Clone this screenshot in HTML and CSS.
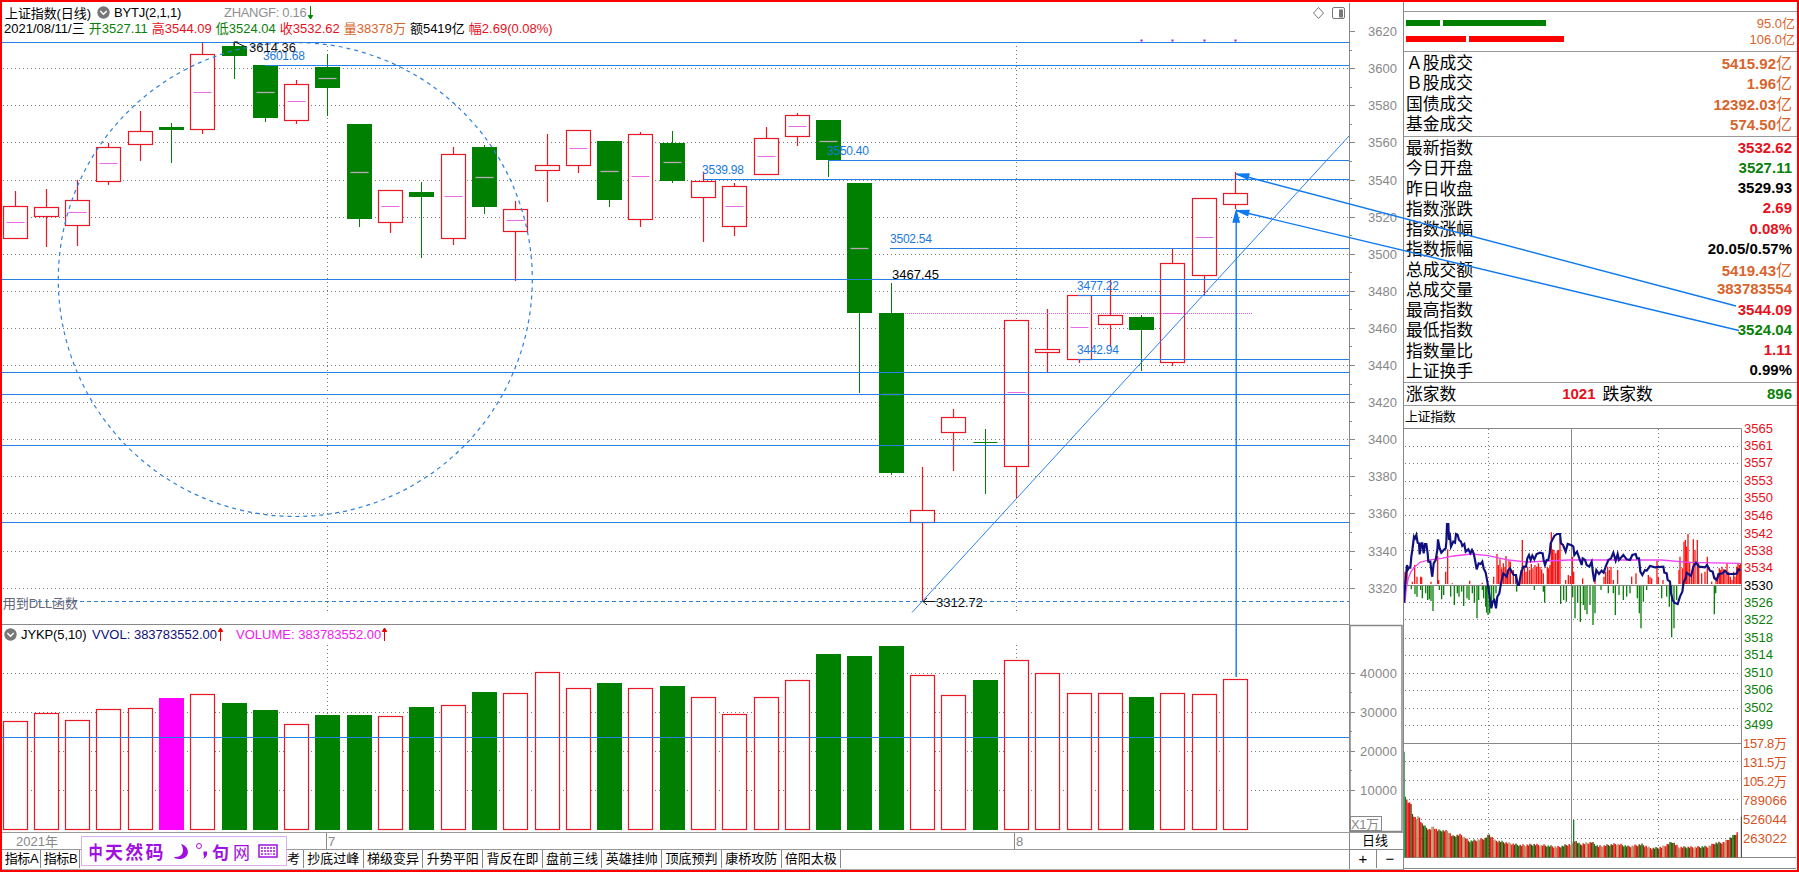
FILE: index.html
```html
<!DOCTYPE html>
<html lang="zh-CN">
<head>
  <meta charset="UTF-8">
  <title>上证指数(日线)</title>
  <link rel="stylesheet" href="styles.css">
</head>
<body>
  <div class="screen">
    <div class="left">
      <div class="charts">
        <div class="plots">
          <div class="head">
            <div class="head-row title-row">
              <span class="name">上证指数(日线)</span>
              <svg class="drop" viewBox="0 0 13 13"><circle cx="6.5" cy="6.5" r="6.2"/><path d="M3.3 5l3.2 3.2L9.7 5"/></svg>
              <span class="formula">BYTJ(2,1,1)</span>
              <span class="zhangf">ZHANGF: 0.16</span>
              <svg class="down" viewBox="0 0 7 15"><path d="M3.5 1v13M1.3 10.500l2.200 3.500 2.200-3.500z"/></svg>
              <svg class="tools" viewBox="0 0 34 16"><path d="M6.5 2.5l5 5.500-5 5.500-5-5.500z"/><rect x="20.5" y="2.5" width="12" height="11" rx="1.5"/><rect class="solid" x="27.5" y="5" width="3" height="7"/></svg>
            </div>
            <div class="head-row quote-row">
              <span>2021/08/11/三</span>
              <span class="green">开3527.11</span>
              <span class="red">高3544.09</span>
              <span class="green">低3524.04</span>
              <span class="red">收3532.62</span>
              <span class="orange">量38378万</span>
              <span>额5419亿</span>
              <span class="red">幅2.69(0.08%)</span>
            </div>
          </div>
          <svg id="price" class="price" viewBox="2 36 1347 589"></svg>
          <div class="sub-head">
            <svg class="drop" viewBox="0 0 13 13"><circle cx="6.5" cy="6.5" r="6.2"/><path d="M3.3 5l3.2 3.2L9.7 5"/></svg>
            <span class="jykp">JYKP(5,10)</span>
            <span class="vvol">VVOL: 383783552.00</span>
            <svg class="up" viewBox="0 0 7 15"><path d="M3.5 14v-13M1.3 4.5l2.200-3.500 2.200 3.500z"/></svg>
            <span class="volume">VOLUME: 383783552.00</span>
            <svg class="up" viewBox="0 0 7 15"><path d="M3.5 14v-13M1.3 4.5l2.200-3.500 2.200 3.500z"/></svg>
          </div>
          <svg id="vol" class="vol" viewBox="2 644 1347 188"></svg>
        </div>
        <svg id="axis" class="axis" viewBox="1349 2 54 830"></svg>
      </div>
      <div class="foot">
        <div class="foot-main">
          <div class="dates">
            <span class="year">2021年</span>
            <span class="month m7">7</span>
            <span class="month m8">8</span>
          </div>
          <div class="tabs">
            <span class="tab short">指标A</span>
            <span class="tab short">指标B</span>
            <span class="tab hidden">参考</span>
            <span class="tab">抄底过峰</span>
            <span class="tab">梯级变异</span>
            <span class="tab">升势平阳</span>
            <span class="tab">背反在即</span>
            <span class="tab">盘前三线</span>
            <span class="tab">英雄挂帅</span>
            <span class="tab">顶底预判</span>
            <span class="tab">康桥攻防</span>
            <span class="tab">倍阳太极</span>
          </div>
        </div>
        <div class="foot-side">
          <div class="period">日线</div>
          <div class="zoom"><span>+</span><span>−</span></div>
        </div>
      </div>
      <div class="ime">
        <span class="zh">中</span>
        <span class="brand">天然码</span>
        <svg class="moon" viewBox="0 0 16 17"><path d="M8 1c10 3 9 15-2 15-3 0-4.500-1-5-2 9 1 11-7 7-13z"/></svg>
        <svg class="punct" viewBox="0 0 13 18"><circle cx="4" cy="4" r="2.5"/><path d="M8.5 9.5h3.500c.5 4-1 6-4 7.500 1.500-2 1.500-3 .5-4z"/></svg>
        <span class="ju">句</span>
        <span class="wang">网</span>
        <svg class="keys" viewBox="0 0 20 14"><rect x="1" y="1" width="18" height="12"/><path d="M3 4h14M3 7h14M3 10h2M6.500 10h7M15 10h2"/></svg>
      </div>
    </div>

    <div class="panel">
      <div class="panel-top"></div>
      <div class="flow">
        <div class="flow-row"><i class="bar g b1"></i><i class="bar g b2"></i><span>95.0亿</span></div>
        <div class="flow-row"><i class="bar r b3"></i><i class="bar r b4"></i><span>106.0亿</span></div>
      </div>
      <div class="group deals">
        <div class="row"><span>Ａ股成交</span><b class="orange">5415.92<em>亿</em></b></div>
        <div class="row"><span>Ｂ股成交</span><b class="orange">1.96<em>亿</em></b></div>
        <div class="row"><span>国债成交</span><b class="orange">12392.03<em>亿</em></b></div>
        <div class="row"><span>基金成交</span><b class="orange">574.50<em>亿</em></b></div>
      </div>
      <div class="group index">
        <div class="row"><span>最新指数</span><b class="red">3532.62</b></div>
        <div class="row"><span>今日开盘</span><b class="green">3527.11</b></div>
        <div class="row"><span>昨日收盘</span><b>3529.93</b></div>
        <div class="row"><span>指数涨跌</span><b class="red">2.69</b></div>
        <div class="row"><span>指数涨幅</span><b class="red">0.08%</b></div>
        <div class="row"><span>指数振幅</span><b>20.05/0.57%</b></div>
        <div class="row"><span>总成交额</span><b class="orange">5419.43<em>亿</em></b></div>
        <div class="row"><span>总成交量</span><b class="orange">383783554</b></div>
        <div class="row"><span>最高指数</span><b class="red">3544.09</b></div>
        <div class="row"><span>最低指数</span><b class="green">3524.04</b></div>
        <div class="row"><span>指数量比</span><b class="red">1.11</b></div>
        <div class="row"><span>上证换手</span><b>0.99%</b></div>
      </div>
      <div class="breadth">
        <span>涨家数</span><b class="red">1021</b><span class="fall">跌家数</span><b class="green">896</b>
      </div>
      <div class="mini-title">上证指数</div>
      <svg id="mini" class="mini" viewBox="1404 418 393 452"></svg>
    </div>

    <svg class="marks" viewBox="0 0 1799 872">
      <path d="M1236.2 677V212M1736 306L1236 174M1739 330.5L1236 210.5"/>
      <path class="tip" d="M1236.2 211l-3 11h6zM1237 174.200l12-.2-1.300 5zM1237 210.700l12-.2-1.300 5z"/>
    </svg>
  </div>
  <script src="script.js"></script>
</body>
</html>
```
FILE: styles.css
```css
body {
  margin: 0;
  background: #fff;
  color: #000;
  font-family: "Liberation Sans", "Noto Sans CJK SC", sans-serif;
  font-size: 13px;
}
.screen {
  position: relative;
  display: flex;
  box-sizing: border-box;
  width: 1799px;
  height: 872px;
  border: 2px solid #f00;
  overflow: hidden;
}
.red {
  color: #e8101c;
}
.green {
  color: #0a800a;
}
.orange {
  color: #d8642c;
}
svg {
  display: block;
  flex: none;
}
svg text {
  font-family: "Liberation Sans", "Noto Sans CJK SC", sans-serif;
  font-size: 13px;
}

/* left side */
.left {
  position: relative;
  width: 1401px;
  flex: none;
}
.charts {
  display: flex;
  height: 830px;
}
.plots {
  width: 1347px;
}
.head {
  height: 34px;
}
.head-row {
  display: flex;
  align-items: center;
  white-space: nowrap;
}
.title-row {
  height: 21px;
  padding: 0 3px;
}
.name {
  width: 92px;
  letter-spacing: -0.1px;
}
.drop {
  width: 13px;
  height: 13px;
}
.drop circle {
  fill: #777;
}
.drop path {
  fill: none;
  stroke: #fff;
  stroke-width: 1.5;
}
.formula {
  width: 110px;
  margin-left: 4px;
  letter-spacing: -0.2px;
}
.zhangf {
  color: #909090;
  letter-spacing: -0.3px;
}
.down, .up {
  width: 7px;
  height: 15px;
}
.down {
  margin-left: 1px;
}
.down path {
  stroke: #080;
  fill: #080;
}
.up path {
  stroke: #e00;
  fill: #e00;
}
.tools {
  width: 34px;
  height: 16px;
  margin-left: auto;
}
.tools path, .tools rect {
  fill: none;
  stroke: #777;
}
.tools .solid {
  fill: #777;
}
.quote-row {
  height: 8px;
  padding-left: 2px;
  gap: 4px;
}
.price {
  width: 1347px;
  height: 589px;
}
.sub-head {
  display: flex;
  align-items: center;
  height: 19px;
  padding-left: 2px;
  line-height: 17px;
}
.jykp {
  width: 71px;
  margin-left: 4px;
  letter-spacing: -0.1px;
}
.vvol {
  color: #101078;
}
.volume {
  margin-left: 12px;
  color: #f018f0;
}
.vol {
  width: 1347px;
  height: 188px;
}
.axis {
  width: 54px;
  height: 830px;
}

/* chart strokes */
.grid {
  fill: none;
  stroke: #777;
  stroke-dasharray: 1 3;
}
.frame {
  fill: none;
  stroke: #888;
}
.level {
  stroke: #2480e4;
  stroke-width: 1.1;
}
.circle {
  fill: none;
  stroke: #2f80dc;
  stroke-width: 1.2;
  stroke-dasharray: 4 4;
}
.floor {
  stroke: #2f80c8;
  stroke-width: 1.2;
  stroke-dasharray: 4 3;
}
.up-bar {
  fill: #fff;
  stroke: #e81824;
  stroke-width: 1.2;
}
.down-bar {
  fill: #008000;
  stroke: #008000;
}
.hot-bar {
  fill: #f0f;
  stroke: #f0f;
}
.mid {
  stroke: #e868e8;
}
.mid-dark {
  stroke: #b8a8b8;
  stroke-width: 1.3;
}
.trend {
  stroke: #2f80ee;
}
.pink-dots {
  stroke: #f050e8;
  stroke-dasharray: 1 1;
}
.tag {
  fill: #1a78e0;
}
svg .tag {
  font-size: 12px;
}

/* bottom bars */
.foot {
  display: flex;
  height: 38px;
  box-sizing: border-box;
  border-top: 1px solid #999;
  border-bottom: 1px solid #aaa;
}
.foot-main {
  width: 1347px;
}
.dates {
  display: flex;
  height: 16px;
  line-height: 17px;
  color: #888;
  border-bottom: 1px solid #999;
}
.year {
  width: 310px;
  padding-left: 14px;
}
.month {
  border-left: 1px solid #888;
  padding-left: 1px;
}
.m7 {
  width: 686px;
}
.tabs {
  display: flex;
  height: 18px;
  line-height: 18px;
}
.tab {
  box-sizing: border-box;
  width: 59.7px;
  border-right: 1px solid #888;
  text-align: center;
  white-space: nowrap;
}
.short {
  width: 39px;
  padding-left: 1px;
  letter-spacing: -0.4px;
}
.hidden {
  width: 224px;
  text-align: right;
  padding-right: 3px;
}
.foot-side {
  flex: 1;
  border-left: 1px solid #888;
  text-align: center;
}
.period {
  height: 16px;
  line-height: 16px;
  padding-right: 3px;
  border-bottom: 1px solid #888;
}
.zoom {
  display: flex;
  height: 18px;
  line-height: 17px;
  font-size: 15px;
}
.zoom span {
  flex: 1;
}
.zoom span + span {
  border-left: 1px solid #888;
}
/* input method bar floats over the tabs */
.ime {
  position: absolute;
  left: 79px;
  top: 834px;
  box-sizing: border-box;
  width: 206px;
  height: 30px;
  padding-left: 4px;
  display: flex;
  align-items: center;
  background: #fff;
  border: 1px solid #d8b0f0;
  color: #a010e0;
}
.zh {
  width: 19px;
  font-size: 19px;
  font-weight: bold;
  transform: scaleX(.75);
}
.brand {
  font-size: 18px;
  font-weight: bold;
  letter-spacing: 2.3px;
  white-space: nowrap;
}
.moon {
  width: 16px;
  height: 17px;
  margin-left: 7px;
  fill: #a010e0;
}
.punct {
  width: 13px;
  height: 18px;
  margin: 0 4px 0 6px;
  fill: #a010e0;
}
.punct circle {
  fill: none;
  stroke: #a010e0;
}
.ju {
  font-size: 17px;
  font-weight: bold;
}
.wang {
  font-size: 17px;
  margin: 0 8px 0 4px;
}
.keys {
  width: 20px;
  height: 14px;
}
.keys rect, .keys path {
  fill: none;
  stroke: #a010e0;
  stroke-width: 1.5;
}
.keys path {
  stroke-dasharray: 2 1;
}

/* right side */
.panel {
  flex: 1;
  border-left: 1px solid #888;
}
.panel-top {
  height: 9px;
  border-bottom: 1px solid #999;
}
.flow {
  height: 39px;
  border-bottom: 1px solid #999;
}
.flow-row {
  display: flex;
  align-items: center;
  height: 16px;
  padding: 3px 2px 0 2px;
  margin-bottom: -3px;
}
.flow-row span {
  margin-left: auto;
  margin-top: -2px;
  color: #d8642c;
}
.bar {
  height: 6px;
  margin-right: 3px;
}
.g {
  background: #008000;
}
.r {
  background: #f00;
}
.b1 { width: 34px; }
.b2 { width: 103px; }
.b3 { width: 60px; }
.b4 { width: 95px; }
.group {
  box-sizing: border-box;
  border-bottom: 1px solid #999;
  padding: 0 5px 0 2px;
}
.deals {
  height: 85px;
}
.index {
  height: 246px;
}
.row {
  display: flex;
  justify-content: space-between;
  align-items: center;
  height: 20.25px;
  font-size: 16.8px;
}
.row b, .breadth b {
  font-size: 15px;
}
.row em {
  font-size: 16px;
  font-style: normal;
  font-weight: normal;
}
.breadth {
  display: flex;
  align-items: center;
  box-sizing: border-box;
  height: 23px;
  padding: 0 5px 2px 2px;
  border-bottom: 1px solid #999;
  font-size: 16.8px;
}
.breadth b {
  flex: 1;
  text-align: right;
}
.breadth .fall {
  margin-left: 7px;
}
.mini-title {
  height: 12px;
  line-height: 21px;
  padding-left: 1px;
  letter-spacing: -0.4px;
}
.mini {
  width: 393px;
  height: 452px;
}
.mini .ink {
  fill: none;
  stroke: #101080;
  stroke-width: 6.5;
}
.mini .avg {
  fill: none;
  stroke: #f040f0;
  stroke-width: 3.8;
}
/* arrows drawn over chart and panel */
.marks {
  position: absolute;
  left: -2px;
  top: -2px;
  width: 1799px;
  height: 872px;
  pointer-events: none;
}
.marks path {
  fill: none;
  stroke: #0f7af0;
  stroke-width: 1.4;
}
.marks .tip {
  fill: #0f7af0;
}
```
FILE: script.js
```javascript
const RED = '#e8101c', GREEN = '#0a800a', ORANGE = '#d8501c', GRAY = '#888';
const line = (x1, y1, x2, y2, cls) => `<line x1="${x1}" y1="${y1}" x2="${x2}" y2="${y2}" class="${cls}"/>`;
const text = (x, y, s, fill, w) => `<text x="${x}" y="${y}" fill="${fill}"${w ? ` textLength="${w}"` : ''}>${s}</text>`;
const px = n => Math.floor(n) + 0.5;
const centre = i => Math.floor(15 + 31.295 * i) + 0.5;

// kind, body top, body bottom, high, low, middle mark, volume top
const days = [
  ['r', 206, 238, 191, 239, 222, 721], ['r', 207, 216, 189, 247, 0, 713], ['r', 200, 225, 180, 246, 212, 720],
  ['r', 147, 181, 143, 185, 163, 709], ['r', 131, 144, 111, 161, 0, 708], ['g', 127, 129, 123, 163, 0, 698],
  ['r', 54, 129, 42, 134, 92, 694], ['g', 46, 55, 42, 79, 0, 703], ['g', 65, 117, 65, 122, 92, 710],
  ['r', 84, 120, 80, 124, 101, 724], ['g', 67, 87, 54, 116, 78, 715], ['g', 124, 218, 124, 227, 172, 715],
  ['r', 190, 222, 190, 233, 206, 716], ['g', 192, 196, 182, 258, 0, 707], ['r', 154, 238, 147, 245, 196, 705],
  ['g', 147, 206, 145, 214, 177, 692], ['r', 209, 231, 201, 281, 220, 693], ['r', 165, 170, 134, 202, 0, 672],
  ['r', 130, 165, 130, 173, 148, 688], ['g', 141, 199, 141, 207, 171, 683], ['r', 134, 219, 132, 227, 176, 688],
  ['g', 143, 180, 131, 183, 162, 686], ['r', 181, 197, 172, 242, 0, 697], ['r', 186, 226, 183, 236, 206, 714],
  ['r', 138, 174, 127, 174, 156, 697], ['r', 115, 136, 113, 146, 126, 680], ['g', 120, 159, 120, 177, 141, 654],
  ['g', 183, 312, 183, 393, 248, 656], ['g', 313, 472, 283, 475, 394, 646], ['r', 510, 522, 467, 601, 0, 675],
  ['r', 417, 432, 409, 471, 0, 695], ['g', 442, 442, 429, 494, 0, 680], ['r', 320, 466, 320, 498, 392, 660],
  ['r', 349, 352, 309, 372, 0, 673], ['r', 295, 359, 295, 363, 327, 693], ['r', 315, 324, 280, 347, 0, 693],
  ['g', 317, 329, 315, 371, 0, 697], ['r', 263, 362, 249, 366, 313, 693], ['r', 198, 275, 198, 295, 237, 694],
  ['r', 193, 204, 172, 209, 0, 679]
];
const cls = { r: 'up-bar', g: 'down-bar', m: 'hot-bar' };
const priceY = v => 68.7 + (3600 - v) * 1.855;

// daily candles
let s = '';
for (let v = 3600; v >= 3320; v -= 20) s += line(3, px(priceY(v)), 1349, px(priceY(v)), 'grid');
s += line(327.5, 46, 327.5, 612, 'grid') + line(1016.5, 46, 1016.5, 612, 'grid');
days.forEach(([k, top, bot, hi, lo, mid], i) => {
  const x = centre(i);
  s += line(x, hi, x, top, cls[k]) + line(x, bot, x, lo, cls[k]);
  // open equals close: a plain dash instead of a body
  if (top === bot) s += line(x - 12, top + .5, x + 12, top + .5, cls[k]);
  else s += `<rect x="${x - 12}" y="${top + .5}" width="24" height="${bot - top}" class="${cls[k]}"/>`;
  if (mid) s += line(x - 9, mid + .5, x + 9, mid + .5, k === 'g' ? 'mid-dark' : 'mid');
});
[[2, 42], [265, 65], [828, 160], [704, 179], [890, 248], [2, 279], [1078, 295], [1078, 359],
 [2, 372], [2, 394], [2, 445], [2, 522]].forEach(([x, y]) => s += line(x, y + .5, 1349, y + .5, 'level'));
s += line(3, 601.5, 1349, 601.5, 'floor');
s += '<ellipse cx="295.3" cy="279.5" rx="237" ry="237" class="circle"/>';
s += line(905, 313.5, 1252, 313.5, 'pink-dots') + line(912, 612.5, 1349, 136, 'trend');
[1141, 1172, 1204, 1235].forEach(x => s += `<rect x="${x - .5}" y="39.5" width="2" height="2" fill="#a020d0"/>`);
[[263, 60, '3601.68'], [827, 155, '3550.40'], [702, 174, '3539.98'], [890, 243, '3502.54'],
 [1077, 290, '3477.22'], [1077, 354, '3442.94']].forEach(([x, y, t]) =>
  s += `<text x="${x}" y="${y}" class="tag" textLength="42">${t}</text>`);
s += text(249, 52, '3614.36', '#111', 47) + text(892, 279, '3467.45', '#000', 47) + text(936, 607, '3312.72', '#111', 47);
s += text(3, 608, '用到DLL函数', '#667', 75);
s += '<path d="M234 46v-4h4M235 42l11 5M923 601.5h12M927 598l-4 3.5 4 3.5" fill="none" stroke="#111"/>';
s += line(2, 624.5, 1349, 624.5, 'frame');
document.getElementById('price').innerHTML = s;

// volume
s = '';
[673, 712, 751, 790].forEach(y => s += line(3, y + .5, 1349, y + .5, 'grid'));
s += line(327.5, 645, 327.5, 828, 'grid') + line(1016.5, 645, 1016.5, 828, 'grid');
days.forEach((d, i) => {
  const c = i === 5 ? cls.m : cls[d[0]];
  s += `<rect x="${centre(i) - 12}" y="${d[6] + .5}" width="24" height="${829 - d[6]}" class="${c}"/>`;
});
s += line(2, 737.5, 1349, 737.5, 'level');
document.getElementById('vol').innerHTML = s;

// value axis
s = line(1349.5, 3, 1349.5, 832, 'frame');
for (let v = 3620; v >= 3320; v -= 20) {
  const y = priceY(v);
  s += line(1349, px(y), 1355, px(y), 'frame') + text(1368, px(y) + 4.5, v, GRAY, 29);
  if (v > 3320) s += line(1349, px(y + 18.5), 1352, px(y + 18.5), 'frame');
}
s += '<rect x="1350" y="625.5" width="52" height="206" class="frame" stroke-width="1.5"/>';
[[673, 40000], [712, 30000], [751, 20000], [790, 10000]].forEach(([y, v]) => {
  s += line(1349, px(y), 1355, px(y), 'frame') + text(1360, y + 5, v, GRAY, 37);
  if (v > 10000) s += line(1349, px(y + 19), 1352, px(y + 19), 'frame');
});
s += '<rect x="1350.5" y="816.5" width="31" height="14" class="frame"/>' + text(1351, 829, 'X1万', GRAY, 28);
document.getElementById('axis').innerHTML = s;

// intraday chart, a third of a pixel per unit
const ink = '27,608 30,560 36,495 39,508 42,503 46,503 49,470 52,450 57,410 60,415 64,405 68,428 72,430 74,463 79,430 82,430 86,460 90,432 94,432 98,460 100,485 106,485 110,520 112,530 116,490 122,480 127,450 129,418 134,445 139,458 146,450 152,445 154,425 156,372 160,372 162,420 164,398 168,440 175,425 180,428 183,402 188,405 192,420 198,425 202,438 208,432 212,455 220,448 226,460 231,450 236,460 240,480 245,508 251,490 257,492 262,485 266,505 272,518 277,545 284,590 289,625 293,605 298,600 303,625 307,590 313,580 318,550 325,520 335,530 340,510 345,505 350,515 356,525 363,525 368,555 372,555 378,520 385,500 393,500 397,475 402,465 407,480 412,467 418,478 425,462 435,458 443,460 446,480 450,495 455,480 460,480 464,460 467,430 478,408 486,402 495,402 498,430 504,435 512,455 518,432 530,436 535,440 538,465 546,455 553,475 560,495 563,475 570,480 575,495 583,500 590,485 594,520 598,545 604,510 612,522 620,512 626,518 632,500 640,480 648,475 655,458 662,482 668,462 672,480 685,465 695,478 705,480 712,465 722,462 726,475 732,475 736,515 742,525 750,510 755,512 765,498 780,502 805,500 808,518 815,520 818,540 825,545 828,580 833,600 838,608 848,612 855,590 862,575 866,545 872,535 875,518 888,528 895,500 903,488 912,500 930,502 936,495 945,512 953,515 958,535 965,540 972,522 983,520 990,512 998,522 1020,522 1026,520 1030,508 1036,510';
const avg = '30,608 34,565 40,535 48,515 60,500 75,487 100,480 140,475 175,468 230,462 280,467 340,480 400,486 520,480 800,480 880,487 1036,490';
const buys = [30,515,36,510,52,545,59,495,66,530,77,530,80,532,108,545,128,468,131,540,152,515,158,448,172,550,224,542,262,548,296,530,306,462,310,495,315,478,320,505,325,490,330,500,333,468,337,510,342,482,346,485,355,510,362,525,378,510,382,420,388,500,393,515,398,500,404,510,409,492,414,505,420,495,425,500,430,490,435,500,440,508,445,520,457,500,461,505,465,495,469,397,473,448,477,450,482,460,487,452,491,450,495,415,512,540,520,525,526,528,532,470,536,515,563,535,600,540,627,530,632,515,638,500,643,510,648,500,655,540,668,510,710,530,723,520,760,525,765,530,770,535,786,482,790,530,804,540,852,510,855,470,862,505,867,425,871,420,875,440,879,402,884,485,890,520,895,418,900,450,907,420,911,490,920,520,930,515,937,470,950,545,963,530,968,520,973,505,977,510,981,500,986,508,990,520,996,490,1001,515,1006,530,1011,540,1016,515,1020,530,1025,500,1029,490,1033,495,1037,490];
const sells = [49,568,60,582,66,590,77,570,82,595,92,580,98,600,103,598,108,603,114,633,133,570,140,598,146,585,167,590,178,615,187,580,192,590,200,575,206,618,216,595,222,600,232,580,238,608,246,655,251,600,262,570,266,595,272,620,275,638,279,645,284,640,290,620,296,600,303,580,365,575,418,570,445,575,449,608,497,612,506,600,514,605,533,592,540,655,548,608,556,666,565,615,570,630,576,643,585,615,594,675,600,640,618,570,640,580,655,580,661,645,672,585,685,600,695,590,705,580,727,595,733,640,738,685,745,605,755,570,800,595,815,590,823,620,830,712,837,685,845,600,958,643,962,580];
const shape = [27,335,31,470,34,475,40,490,46,480,52,520,64,535,72,528,80,548,92,560,104,568,115,558,127,570,140,570,160,572,172,588,197,582,222,602,240,600,270,594,283,582,300,600,330,606,380,615,415,612,450,615,490,620,520,612,533,612,536,600,540,600,555,612,590,605,610,618,665,610,700,618,740,612,770,624,800,620,833,604,850,620,900,620,940,618,960,608,985,606,1010,590,1025,578];
const envelope = x => {
  let i = 0;
  while (i < shape.length - 4 && shape[i + 2] < x) i += 2;
  const t = (x - shape[i]) / (shape[i + 2] - shape[i]);
  return shape[i + 1] + t * (shape[i + 3] - shape[i + 1]);
};

s = '<path d="M1404 428.5H1741.5V857M1571.5 428V857M1404 585.5H1741M1404 743.5H1741M1404 857.5H1796M1404 868.5H1796" class="frame"/>';
[446, 463, 481, 498, 515, 533, 550, 567, 602, 619, 638, 655, 673, 690, 708, 725, 761, 780, 799, 819, 838]
  .forEach(y => s += line(1405, y + .5, 1741, y + .5, 'grid'));
s += line(1488.5, 429, 1488.5, 857, 'grid') + line(1658.5, 429, 1658.5, 857, 'grid');
let sticks = '';
for (let i = 0; i < buys.length; i += 2) sticks += `<path d="M${buys[i]} 552V${buys[i + 1]}" stroke="#fc1414" stroke-width="4"/>`;
for (let i = 0; i < sells.length; i += 2) sticks += `<path d="M${sells[i]} 558V${sells[i + 1]}" stroke="#0c800c" stroke-width="4"/>`;
s += `<g transform="translate(1395 400) scale(.33333)">${sticks}<polyline points="${avg}" class="avg"/><polyline points="${ink}" class="ink"/></g>`;
const tones = ['#f01010', '#8c2c08', '#008000', '#8c2c08', '#f01010', '#6d8a4c', '#008000', '#5c3a08', '#f01010', '#b09060', '#4c4c08'];
sticks = '';
for (let n = 0, x = 27; x < 1028; n++, x += 4.2) {
  const y = envelope(x) + (n * 7 % 5 - 1) * (n > 2 ? 1.6 : 0);
  sticks += `<path d="M${x.toFixed(1)} 652V${y.toFixed(1)}" stroke="${n < 2 ? '#188030' : n < 5 ? '#e81010' : tones[(n * n + n * 3) % 11]}" stroke-width="4.2"/>`;
}
sticks += '<path d="M536 652V540" stroke="#188030" stroke-width="4"/><path d="M1039 652V530" stroke="#444" stroke-width="3"/>';
s += `<g transform="translate(1395 640) scale(.33333)">${sticks}</g>`;
[[428, 3565], [445, 3561], [462, 3557], [480, 3553], [497, 3550], [515, 3546], [533, 3542], [550, 3538], [567, 3534],
 [585, 3530], [602, 3526], [619, 3522], [637, 3518], [654, 3514], [672, 3510], [689, 3506], [707, 3502], [724, 3499]]
  .forEach(([y, v]) => s += text(1744, y + 4.5, v, v > 3530 ? RED : v < 3530 ? GREEN : '#000', 29));
[[743, '157.8万'], [762, '131.5万'], [781, '105.2万'], [800, '789066'], [819, '526044'], [838, '263022']]
  .forEach(([y, v]) => s += text(1743, y + 4.5, v, ORANGE, 44));
document.getElementById('mini').innerHTML = s;
```
